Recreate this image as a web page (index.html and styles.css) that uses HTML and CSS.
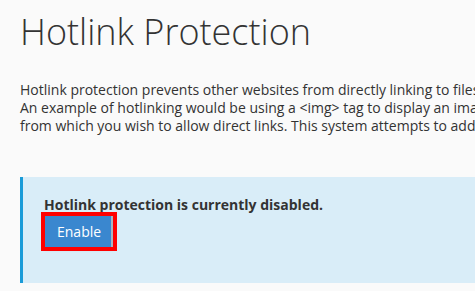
FILE: index.html
```html
<!DOCTYPE html>
<html lang="en">
<head>
<meta charset="utf-8">
<title>Hotlink Protection</title>
<link rel="stylesheet" href="styles.css">
</head>
<body>
<div class="page">
  <h1 class="title">Hotlink Protection</h1>
  <p class="intro">Hotlink protection prevents other websites from directly linking to files on your website.<br>An example of hotlinking would be using a &lt;img&gt; tag to display an image from your site from somewhere else on the net.<br>from which you wish to allow direct links. This system attempts to add all sites it knows you own to the list.</p>
  <div class="alert">
    <div class="alert-title">Hotlink protection is currently disabled.</div>
    <button class="btn" type="button">Enable</button>
  </div>
</div>
</body>
</html>
```

FILE: styles.css
```css
html, body {
  margin: 0;
  padding: 0;
  background: #fafafa;
  overflow: hidden;
}
body {
  font-family: "Open Sans", "DejaVu Sans", sans-serif;
  color: #333;
}
.page {
  width: 1200px;
  padding: 12px 20px 0 20px;
}
.title {
  margin: 0;
  font-size: 36px;
  font-weight: 300;
  line-height: 39.6px;
  color: #333;
}
.intro {
  margin: 29px 0 0 0;
  font-size: 14px;
  line-height: 18px;
  white-space: nowrap;
}
.alert {
  margin-top: 42px;
  background: #d9edf8;
  border-left: 3px solid #1a9bd8;
  padding: 18px 21px 36px 21px;
}
.alert-title {
  font-size: 14px;
  line-height: 20px;
  font-weight: 700;
  margin-bottom: 1px;
}
.btn {
  display: block;
  margin-left: 1px;
  height: 31px;
  padding: 0 10px 0 12px;
  font-family: "Open Sans", "DejaVu Sans", sans-serif;
  font-size: 14px;
  line-height: 31px;
  color: #fff;
  background: #3a87cf;
  border: none;
  border-right: 2px solid #a9b6c2;
  border-radius: 0;
  outline: 4px solid #f00;
  box-shadow: 0 2px 4px rgba(0,0,0,0.15);
}
```
